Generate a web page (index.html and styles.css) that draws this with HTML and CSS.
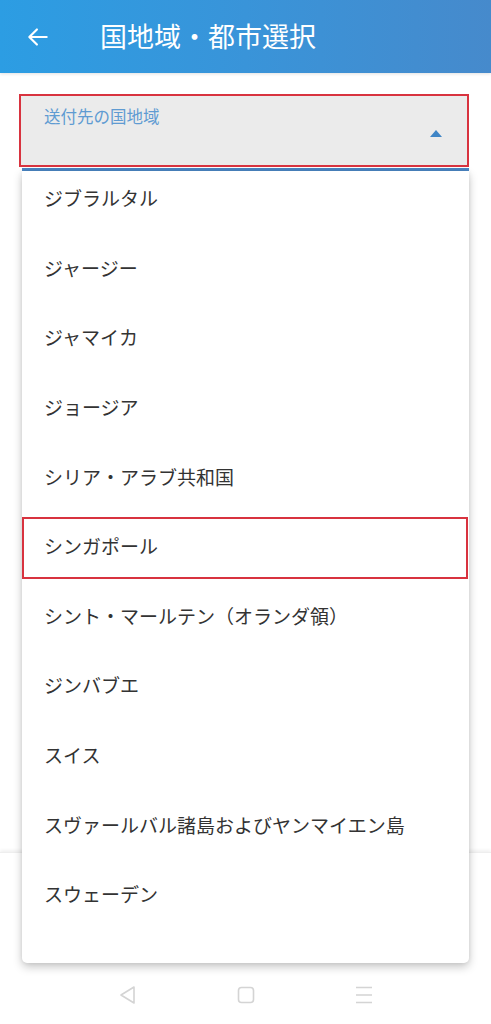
FILE: index.html
```html
<!DOCTYPE html>
<html lang="ja">
<head>
    <meta charset="UTF-8">
    <meta name="viewport" content="width=device-width, initial-scale=1.0">
    <title>国地域・都市選択</title>
    <link rel="stylesheet" href="styles.css">
</head>
<body>
    <header class="appbar">
        <svg class="back-icon" viewBox="0 0 24 24" width="24" height="24">
            <path d="M20 12H5M11 5l-7 7 7 7" fill="none" stroke="#fff" stroke-width="2" stroke-linecap="round" stroke-linejoin="round"/>
        </svg>
        <h1 class="appbar-title">国地域・都市選択</h1>
    </header>

    <main class="content">
        <div class="select-field">
            <span class="select-label">送付先の国地域</span>
            <span class="select-arrow"></span>
        </div>
        <div class="select-underline"></div>

        <div class="dropdown">
            <ul class="dropdown-list">
                <li>ジブラルタル</li>
                <li>ジャージー</li>
                <li>ジャマイカ</li>
                <li>ジョージア</li>
                <li>シリア・アラブ共和国</li>
                <li class="selected">シンガポール</li>
                <li>シント・マールテン（オランダ領）</li>
                <li>ジンバブエ</li>
                <li>スイス</li>
                <li>スヴァールバル諸島およびヤンマイエン島</li>
                <li>スウェーデン</li>
            </ul>
        </div>
    </main>

    <div class="bottom-panel"></div>

    <nav class="system-nav">
        <svg viewBox="0 0 20 20" width="20" height="20">
            <path d="M16 2L3 10l13 8z" fill="none" stroke="#d4d4d4" stroke-width="1.6" stroke-linejoin="round"/>
        </svg>
        <svg viewBox="0 0 20 20" width="20" height="20">
            <rect x="2.5" y="2.5" width="15" height="15" rx="3" fill="none" stroke="#d4d4d4" stroke-width="1.6"/>
        </svg>
        <svg viewBox="0 0 20 20" width="20" height="20">
            <path d="M2 2.5h16M2 10h16M2 17.5h16" fill="none" stroke="#d4d4d4" stroke-width="1.4"/>
        </svg>
    </nav>
</body>
</html>
```

FILE: styles.css
```css
body {
    margin: 0;
    height: 1024px;
    display: flex;
    flex-direction: column;
    background: #fff;
    font-family: "Noto Sans CJK JP", "Noto Sans", sans-serif;
    color: #333;
    overflow: hidden;
}
.appbar {
    height: 73px;
    flex-shrink: 0;
    display: flex;
    align-items: center;
    padding-left: 25px;
    background: linear-gradient(90deg, #2c9de3 0%, #3994d9 50%, #468acc 100%);
    box-shadow: 0 1px 3px rgba(0,0,0,0.12);
    box-sizing: border-box;
}
.back-icon {
    width: 26px;
    height: 26px;
}
.appbar-title {
    margin: 0 0 0 49px;
    font-size: 27px;
    font-weight: 400;
    color: #fff;
    line-height: 1;
    position: relative;
    top: -1px;
}
.content {
    flex: 1;
    position: relative;
    padding: 21px 22px 0 19px;
}
.select-field {
    height: 73px;
    box-sizing: border-box;
    border: 2px solid #d8333f;
    background: #ebebeb;
    position: relative;
}
.select-label {
    position: absolute;
    left: 23px;
    top: 12px;
    font-size: 16.5px;
    color: #5f9bd2;
    line-height: 1;
}
.select-arrow {
    position: absolute;
    right: 25px;
    top: 34px;
    width: 0;
    height: 0;
    border-left: 6px solid transparent;
    border-right: 6px solid transparent;
    border-bottom: 7px solid #3f85c6;
}
.select-underline {
    height: 3px;
    margin: 1px 0 0 3px;
    background: #4b87c5;
}
.dropdown {
    position: absolute;
    top: 98px;
    left: 22px;
    width: 447px;
    height: 792px;
    background: #fff;
    border-radius: 0 0 5px 5px;
    box-shadow: 0 4px 10px rgba(0,0,0,0.22), 0 0 4px rgba(0,0,0,0.08);
    overflow: hidden;
    z-index: 2;
}
.dropdown-list {
    list-style: none;
    margin: -8px 0 0 0;
    padding: 0;
}
.dropdown-list li {
    height: 69.6px;
    display: flex;
    align-items: center;
    padding-left: 22px;
    font-size: 19px;
    color: #333;
    position: relative;
}
.dropdown-list li.selected::after {
    content: "";
    position: absolute;
    left: 0;
    right: 1px;
    top: 6px;
    bottom: 2px;
    border: 2px solid #d8333f;
}
.bottom-panel {
    height: 123px;
    flex-shrink: 0;
    background: #fff;
    box-shadow: 0 -2px 3px rgba(0,0,0,0.06);
    border-top: 1px solid #eeeeee;
}
.system-nav {
    height: 48px;
    flex-shrink: 0;
    display: flex;
    justify-content: center;
    gap: 98px;
    padding-top: 9px;
    box-sizing: border-box;
    background: #fff;
}
```
